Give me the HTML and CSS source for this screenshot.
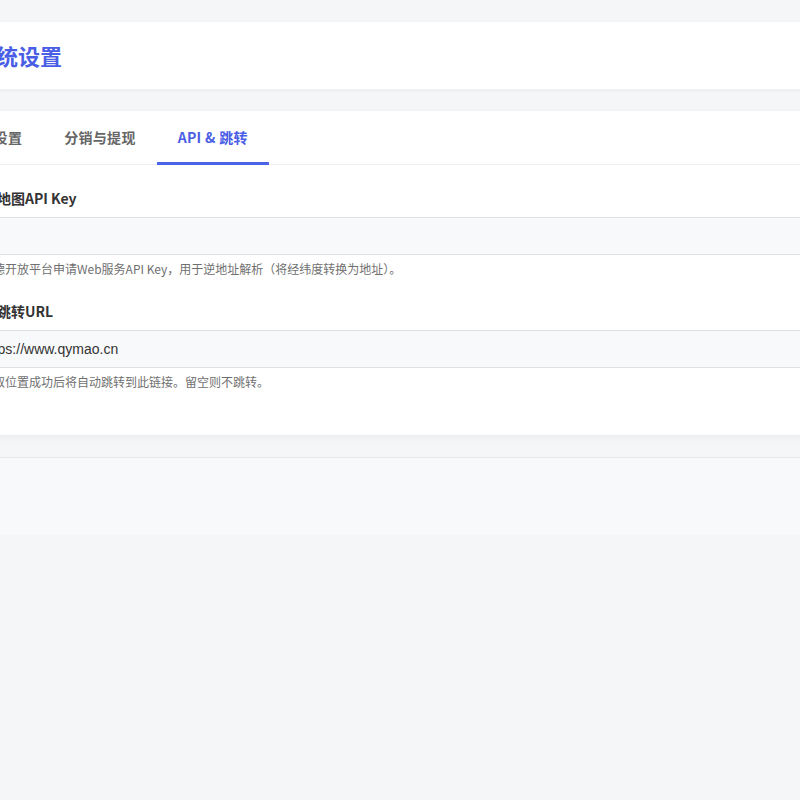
FILE: index.html
```html
<!DOCTYPE html>
<html lang="zh-CN">
<head>
  <meta charset="UTF-8">
  <meta name="viewport" content="width=device-width, initial-scale=1.0">
  <title>系统设置</title>
  <link rel="stylesheet" href="styles.css">
</head>
<body>
  <div class="wrap">
    <div class="page-header">
      <h1>系统设置</h1>
    </div>
    <div class="panel">
      <div class="tabs">
        <div class="tab">基础设置</div>
        <div class="tab">分销与提现</div>
        <div class="tab active">API &amp; 跳转</div>
      </div>
      <form class="form">
        <div class="field">
          <label for="amap-key">高德地图API Key</label>
          <input id="amap-key" type="text" value="">
          <p class="hint">在高德开放平台申请Web服务API Key，用于逆地址解析（将经纬度转换为地址）。</p>
        </div>
        <div class="field">
          <label for="jump-url">成功跳转URL</label>
          <input id="jump-url" type="text" value="https://www.qymao.cn">
          <p class="hint">在获取位置成功后将自动跳转到此链接。留空则不跳转。</p>
        </div>
      </form>
    </div>
    <div class="footer"></div>
  </div>
</body>
</html>
```

FILE: styles.css
```css
html, body {
  margin: 0;
  padding: 0;
  background: #f5f6f8;
  overflow-x: hidden;
}
body {
  font-family: "Noto Sans CJK SC", "Noto Sans", sans-serif;
  color: #333;
}
.wrap {
  width: 920px;
  margin-left: -56px;
  padding-top: 22px;
}
.page-header {
  background: #fff;
  height: 67px;
  display: flex;
  align-items: center;
  padding: 0 30px;
  box-shadow: 0 1px 4px rgba(0,0,0,0.05);
}
.page-header h1 {
  margin: 0 0 2px;
  font-size: 22px;
  font-weight: 700;
  color: #4a5ee5;
}
.panel {
  background: #fff;
  margin-top: 22px;
  box-shadow: 0 2px 8px rgba(0,0,0,0.05);
}
.tabs {
  display: flex;
  height: 53px;
  border-bottom: 1px solid #eceef1;
}
.tab {
  padding: 0 21px;
  display: flex;
  align-items: center;
  font-size: 14px;
  font-weight: 600;
  letter-spacing: 0.3px;
  color: #666;
  border-bottom: 3px solid transparent;
  margin-bottom: -1px;
  cursor: pointer;
}
.tab.active {
  color: #4a5ee5;
  font-weight: 700;
  border-bottom-color: #4a63e8;
}
.form {
  padding: 23px 25px 46px;
}
.field + .field {
  margin-top: 25px;
}
.field label {
  display: block;
  font-size: 14px;
  font-weight: 700;
  line-height: 20px;
  color: #333;
  margin-bottom: 9px;
}
.field input {
  display: block;
  box-sizing: border-box;
  width: 100%;
  height: 38px;
  padding: 0 12px;
  border: 1px solid #e0e0e0;
  background: #f8f9fa;
  font-family: "Liberation Sans", Arial, sans-serif;
  font-size: 14px;
  color: #333;
  outline: none;
}
.hint {
  margin: 7px 0 0;
  font-size: 12px;
  line-height: 14px;
  color: #707070;
}
.footer {
  margin-top: 22px;
  height: 77px;
  border-top: 1px solid #e6e8eb;
  background: #f8f9fa;
}
```
